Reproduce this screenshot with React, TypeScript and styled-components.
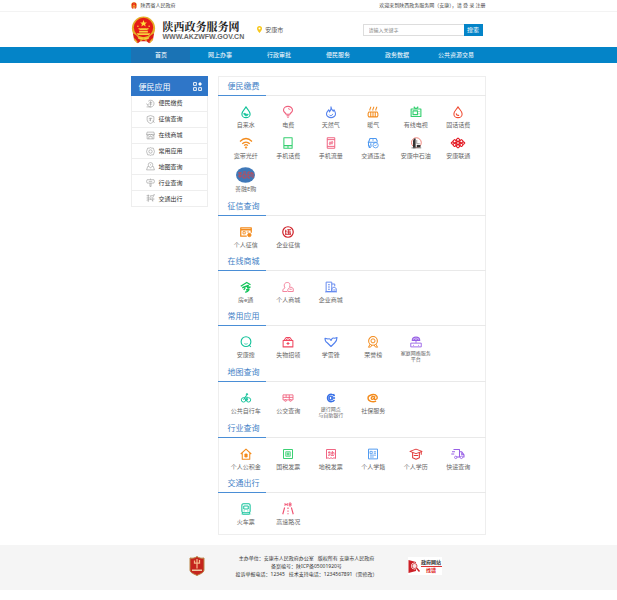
import React from 'react';
import styled, { createGlobalStyle } from 'styled-components';

const GlobalStyle = createGlobalStyle`
  * { box-sizing: border-box; }
  body {
    margin: 0;
    background: #fff;
    color: #555;
    font-family: "Noto Sans", "Noto Sans CJK SC", sans-serif;
    font-size: 6px;
  }
  a { color: inherit; text-decoration: none; }
  ul { list-style: none; margin: 0; padding: 0; }
  svg { display: block; overflow: visible; }
`;

const Container = styled.div`
  width: 57.4%;
  min-width: 340px;
  margin: 0 auto;
`;

const TopBar = styled.div`
  border-bottom: 1px solid #f3f3f3;
  font-size: 5px;
  line-height: 11px;
  color: #444;
`;

const TopRow = styled(Container)`
  display: flex;
  justify-content: space-between;
`;

const TopLink = styled.a`
  display: flex;
  align-items: center;
  gap: 3px;
`;

const Brand = styled(Container)`
  display: flex;
  align-items: center;
  height: 35px;
`;

const BrandLink = styled.a`
  display: flex;
  align-items: center;
  gap: 6px;
`;

const BrandName = styled.h1`
  margin: 0;
  font-family: "Noto Serif CJK SC", "Noto Sans CJK SC", serif;
  font-size: 11px;
  line-height: 14px;
  font-weight: 700;
  color: #222;
  white-space: nowrap;
`;

const BrandUrl = styled.div`
  font-family: "Liberation Sans", sans-serif;
  font-size: 7px;
  line-height: 8px;
  font-weight: 700;
  color: #666;
`;

const Place = styled.div`
  display: flex;
  align-items: center;
  gap: 3px;
  margin-left: 13px;
  line-height: 10px;
`;

const Search = styled.form`
  display: flex;
  width: 120px;
  height: 12px;
  margin: 0 3px 0 auto;
`;

const SearchInput = styled.input`
  flex: 1;
  min-width: 0;
  padding: 0 5px;
  border: 1px solid #ddd;
  border-right: 0;
  outline: 0;
  font: inherit;
  font-size: 5px;
  &::placeholder { color: #888; }
`;

const SearchButton = styled.button`
  width: 19px;
  padding: 0;
  border: 0;
  background: #0484c8;
  color: #fff;
  font: inherit;
`;

const Nav = styled.nav`
  background: #0484c8;
`;

const NavRow = styled(Container)`
  display: flex;
`;

const NavLink = styled.a<{ $active?: boolean }>`
  flex: 1;
  text-align: center;
  font-size: 6px;
  line-height: 16px;
  color: #fff;
  background: ${p => (p.$active ? '#1a73b5' : 'transparent')};
`;

const Body = styled(Container)`
  display: flex;
  align-items: flex-start;
  gap: 10px;
  padding: 13px 0 10px;
`;

const Sidebar = styled.aside`
  width: 77px;
  flex: none;
`;

const SideHead = styled.h2`
  display: flex;
  align-items: center;
  justify-content: space-between;
  height: 20px;
  margin: 0;
  padding: 0 6px 0 7px;
  background: #2f76c8;
  color: #fff;
  font-size: 8px;
  font-weight: 400;
`;

const SideList = styled.ul`
  display: flex;
  flex-direction: column;
  min-height: 111px;
  border: 1px solid #eee;
  border-top: 0;
`;

const SideItem = styled.li`
  display: flex;
  flex: 1;
  border-bottom: 1px solid #eee;
  &:last-child { border-bottom: 0; }
`;

const SideLink = styled.a`
  display: flex;
  flex: 1;
  align-items: center;
  gap: 3px;
  padding-left: 14px;
  line-height: 10px;
  color: #333;
`;

const Panel = styled.main`
  flex: 1;
  min-width: 0;
  box-shadow: inset 0 0 0 1px #eee;
`;

const SectionHead = styled.div`
  display: flex;
  height: 20px;
  border-bottom: 1px solid #e9e9e9;
`;

const SectionTitle = styled.h2`
  width: 48px;
  height: 20px;
  margin: 0;
  padding-left: 9px;
  border-bottom: 1px solid #4a8ed6;
  color: #3f7fc6;
  font-size: 8px;
  line-height: 20px;
  font-weight: 400;
`;

const Services = styled.div<{ $height: number }>`
  display: grid;
  grid-template-columns: repeat(6, 1fr);
  align-content: start;
  row-gap: 6px;
  min-height: ${p => p.$height}px;
  padding: 9px 6px 0 6px;
`;

const Service = styled.a`
  display: flex;
  flex-direction: column;
  align-items: center;
`;

const IconBox = styled.span<{ $tall?: boolean }>`
  display: flex;
  align-items: center;
  justify-content: center;
  height: ${p => (p.$tall ? 16 : 14)}px;
`;

const Label = styled.span<{ $small?: boolean }>`
  display: flex;
  flex-direction: column;
  align-items: center;
  justify-content: center;
  height: ${p => (p.$small ? 13 : 11)}px;
  font-size: ${p => (p.$small ? 5 : 6)}px;
  line-height: 6px;
  white-space: nowrap;
  color: #666;
`;

const Footer = styled.footer`
  background: #f5f5f5;
`;

const FooterRow = styled(Container)`
  display: grid;
  grid-template-columns: 16px 1fr 34px;
  align-items: center;
  padding: 9px 44px 12px 58px;
`;

const FooterText = styled.div`
  text-align: center;
  font-size: 5px;
  line-height: 8px;
  color: #333;
  white-space: nowrap;
`;

const FooterLine = styled.div`
  display: flex;
  justify-content: center;
  gap: 4px;
`;

const ReportLink = styled.a`
  display: flex;
  align-items: center;
  gap: 1px;
  height: 18px;
  background: #fff;
  line-height: 7px;
  font-size: 5px;
  font-weight: 700;
  color: #333;
  text-align: center;
`;

const ReportText = styled.span`
  flex: 1;
  white-space: nowrap;
`;

const ReportSub = styled.span`
  display: block;
  border-top: 1px solid #d33;
  color: #d22;
`;

const teal = '#13c29a';
const pink = '#f0627f';
const blue = '#5482ee';
const sky = '#4d98f0';
const orange = '#f38b1c';
const green = '#36cf70';
const red = '#e23a3a';
const purple = '#9860e6';

const drawings: Record<string, React.ReactNode> = {
  water: <><path d="M8 1C6 5 2.500 7 2.500 10.500a5.500 5 0 0 0 11 0C13.500 7 10 5 8 1z" strokeWidth="1.500" /><path d="M5 10c2-1 3 2 6 1-1 3-5 3-6-1z" fill="currentColor" /></>,
  bulb: <><path d="M5.500 11C5 9 2 8.500 2 5.500a6 5 0 0 1 12 0C14 8.500 11 9 10.500 11zM6 13h4M7 15h2" strokeWidth="1.500" /><path d="M8 3.500a3 3 0 0 1 3 2" /></>,
  flame: <><path d="M8 1c.5 4 2 4 3 6l1-2c1 2 2 3 2 5.500a6 5 0 0 1-12 0C2 8 4 7 5 5c1 1 1 2 1 3 2-2 2.500-4 2-7z" strokeWidth="1.400" /><path d="M5.500 11.500c1 2 4 2 5-1" /></>,
  heater: <><path d="M2.500 8h11l1 2v3l-1 1.500h-11l-1-1.500v-3zM5 8v6M8 8v6M11 8v6" strokeWidth="1.400" /><path d="M4 6c-1-2 1-2 1-5M8 6c-1-2 1-2 1-5M12 6c-1-2 1-2 1-5" strokeWidth="1.400" /></>,
  tv: <path d="M1.500 4h13v10h-13zM4 6.500h6v5H4zM12 7v1M12 10v1M5 1l3 3 3-3" strokeWidth="1.500" />,
  drop: <><path d="M8 1C6 5 2.500 7 2.500 10.500a5.500 5 0 0 0 11 0C13.500 7 10 5 8 1z" strokeWidth="1.400" /><path d="M5.500 10c.5 2 2 3 4 2.500" strokeWidth="1.600" /></>,
  wifi: <><path d="M0 6c5-5 11-5 16 0M3 9c3-3 7-3 10 0M5.500 11.500c1.500-1.500 3.500-1.500 5 0" strokeWidth="1.600" /><circle cx="8" cy="14" r="1" fill="currentColor" /></>,
  phone: <path d="M2.500 1h11v14h-11zM2.500 11.500h11M7 13.300h2" strokeWidth="1.400" />,
  data: <path d="M3 1h10v14H3zM3 3.500h10M3 12.500h10M5.500 7h5L9 5.500M10.500 9h-5L7 10.500" strokeWidth="1.300" />,
  car: <><path d="M7 12H2V7l2-5h8l2 4M1 7h13M4 9.500h2M3 12v2h2M7 4h2" strokeWidth="1.400" /><circle cx="11.500" cy="11" r="3.500" /><path d="m10 11 1 1 2-2" /></>,
  oil: <><circle cx="8.500" cy="7.500" r="6.500" stroke="#ed6a5f" /><path d="M4 15V5l1.500-3h2v13zM9 10.500h5V14H9z" fill="#333" stroke="none" /><path d="M9 4v5h4" stroke="#888" /><path d="M2 14.500h13" stroke="#777" /></>,
  unicom: <g strokeWidth="1.500"><rect x="6.200" y="2" width="3.600" height="3.600" rx=".8" transform="rotate(45 8 3.800)" /><rect x="6.200" y="10.400" width="3.600" height="3.600" rx=".8" transform="rotate(45 8 12.200)" /><rect x="6.200" y="6.200" width="3.600" height="3.600" rx=".8" transform="rotate(45 8 8)" /><rect x="1.700" y="4" width="3.600" height="3.600" rx=".8" transform="rotate(45 3.500 5.800)" /><rect x="10.700" y="4" width="3.600" height="3.600" rx=".8" transform="rotate(45 12.500 5.800)" /><rect x="1.700" y="8.600" width="3.600" height="3.600" rx=".8" transform="rotate(45 3.500 10.400)" /><rect x="10.700" y="8.600" width="3.600" height="3.600" rx=".8" transform="rotate(45 12.500 10.400)" /><path d="m1 6-2 2 2 2M15 6l2 2-2 2" /></g>,
  card: <><path d="M9 13.500H1v-11h14V9M1 5h14" strokeWidth="1.700" /><path d="M4 7.500h3v3H4zM9 8h3" /><circle cx="12.500" cy="12" r="2.300" fill="currentColor" /></>,
  seal: <><circle cx="8" cy="8" r="7" strokeWidth="1.600" /><path d="M5 5v6M4 7h2M7 5h5M9 5v6M7 8h5M11 9v2M4 11h8" strokeWidth="1.300" /></>,
  house: <path d="m1 7 8-5 5 3M3 9l8-3-1 3 4-1M5 12l2-3M11 10c2 0 1 4-4 5M8 12l4-1" strokeWidth="1.800" />,
  people: <><path d="M7 14H1c0-3 1-4 3-5-2-3-1-7 3-7s4 3 3 6" strokeWidth="1.300" /><path d="M8 14c-1-2 0-4 2-5l2-1 3 2v4zM10 11h3" strokeWidth="1.300" /></>,
  building: <><path d="M1.500 14V1.500H9V14zM4 5h2.500M4 8h2.500M4 11h2.500M9 4h4v3" strokeWidth="1.300" /><path d="M9 10l3-2 3 2v4H9zM11 12h3M0 14.500h16" strokeWidth="1.200" /></>,
  search: <><circle cx="8" cy="7.500" r="6.500" strokeWidth="1.500" /><path d="m12 12 2.500 2.500M6 10c1 1 3 1 4 0" strokeWidth="1.400" /></>,
  lost: <><path d="M1.500 6h13v8.500h-13zM2.500 6l3-4h5l3 4M5 6c2-3 4-3 6 0" strokeWidth="1.400" /><path d="M6 10h4M8 8v4" strokeWidth="1.400" /></>,
  heart: <path d="M8 14 3 9C1 8 0 5 0 3l4 1c2-1 3 0 4 2 1-3 3-4 5-3l3-1c0 3-1 5-3 7z" strokeWidth="1.500" />,
  medal: <><circle cx="8" cy="6.500" r="5.800" strokeWidth="1.400" /><circle cx="8" cy="6.500" r="2.700" strokeWidth="1.300" /><path d="m4 11-2 4 3-.5L6.500 12M12 11l2 4-3-.5L9.500 12" strokeWidth="1.300" /></>,
  router: <><path d="M1 9.500h14v5H1zM8 6v3M4 12.500h1M11 12.500h1" strokeWidth="1.200" /><path d="M3 6c0-6 10-6 10 0zM5 6c0-3 6-3 6 0" strokeWidth="1.500" /></>,
  bike: <><circle cx="4" cy="11" r="3.500" strokeWidth="1.500" /><circle cx="12" cy="11" r="3.500" strokeWidth="1.500" /><path d="m4 11 3-5 4 5H7L5 7M10 2l-3 4 4 1" strokeWidth="1.500" /><circle cx="9.500" cy="2" r="1.200" fill="currentColor" /></>,
  bus: <><path d="M0 3h16v8H0zM0 7h16M5 3v4M10 3v8" strokeWidth="1.400" /><circle cx="4" cy="12" r="1.500" /><circle cx="12" cy="12" r="1.500" /></>,
  bank: <path d="M13.500 5A6 6 0 1 0 13.500 11M10.500 6.500a3 3 0 1 0 0 3M8 8h6.500M12 1.500l1.500 3.500" strokeWidth="2.200" />,
  social: <path d="M13 13C7 15.500 0 13 0 8s11-8 14-3-4 7-4 4l1-4M9.500 6C6 4 4 9 6 10s3-1 4-2" strokeWidth="2.200" />,
  home: <><path d="m1 8 7-6.500L15 8M3 7v8h10V7" strokeWidth="1.400" /><path d="M6.500 8h3v4h-3z" fill="currentColor" /></>,
  national: <><path d="M2 2h12v12H2z" strokeWidth="1.300" /><path d="M5 5h6v6H5zM6 7h4M6 9h4M8 6v4" /></>,
  local: <><path d="M2 14V2h12v12l-2-1-2 1-2-1-2 1-2-1z" strokeWidth="1.300" /><path d="M4 6h3M5.500 4v6M4 10l3-1M8 7l4-1v3M10 4v5M8 5v5h4" /></>,
  record: <><path d="M2 1.500h12v13H2z" strokeWidth="1.300" /><path d="M4 4.500h3v3H4zM9 5h3M9 7h3M4 9.500h8M4 12h5" /></>,
  graduate: <path d="m0 4.500 8-3 8 3-8 3zM3.500 6v7l4.500 2 4.500-2V6M15 4.500V9M5 10h6" strokeWidth="1.400" />,
  truck: <><path d="M2 2h8v10H6M0 5h4M-1 8h4M10 5h3l3 4v3h-2M10 12h1M13 6v3h3" strokeWidth="1.400" /><circle cx="5" cy="12.500" r="1.600" /><circle cx="12.500" cy="12.500" r="1.600" /></>,
  train: <><rect x="2.500" y="1" width="11" height="12" rx="2" strokeWidth="1.400" /><path d="M5 4h6v4H5zM5 10.500h1M10 10.500h1M4 13l-2 2M12 13l2 2M3 15h10" strokeWidth="1.300" /></>,
  road: <><path d="M3.500 6 1 15M12.500 6l2.500 9M8 6v2M8 10v1.500M8 13.500V15" strokeWidth="1.500" /><path d="M4 0v4M4 2h3M7 0v4M9.500 0h2.500v4H9.500zM9.500 2H12" /></>,
  fee: <path d="M4 4a6 6 0 1 1-1 7M1 8l2 3 2-3M6 6h5M6 9h5M8 4v8M1 14h8" />,
  credit: <path d="M2 3l6-2 6 2v5c0 4-3 6-6 7-3-1-6-3-6-7zM5 6h6M5 9h4M8 5v6M12 10l3 4" />,
  shop: <path d="M2 7v7h12V7M1 6l1-4h12l1 4zM1 6c2 3 4 2 5 0 1 2 3 2 4 0 1 2 4 3 5 0M5 14v-4h6v4" />,
  gear: <><circle cx="8" cy="8" r="3" /><path d="m8 1 2 1h3l1 3 1 3-1 3-1 3h-3l-2 1-2-1H3l-1-3-1-3 1-3 1-3h3z" /></>,
  map: <path d="M5 8H3l-2 6h14l-2-6h-2M8 11C6 8 4 7 4 5a4 4 0 0 1 8 0c0 2-2 3-4 6zM8 4v2" />,
  sign: <path d="M2 3h12l1 3-1 3H2L1 6zM7 9v6h2V9M5 6h6M8 1v2" />,
  travel: <path d="M1 3h5M4 1v13M1 7h6M1 11l5-1M8 3h3l4-2-3 5v7l-2-4-3 1 2-3zM12 9h3" />,
};

const Icon = ({ name, color, size = 13 }: { name: string; color: string; size?: number }) => (
  <svg width={size} height={size} viewBox="0 0 16 16" fill="none" stroke="currentColor" strokeWidth="1.100" color={color} strokeLinejoin="round" aria-hidden="true">
    {drawings[name]}
  </svg>
);

const Emblem = ({ size }: { size: number }) => (
  <svg width={size} height={Math.round(size * 1.1)} viewBox="0 0 40 44" aria-hidden="true">
    <circle cx="20" cy="19" r="18.500" fill="#e5ae27" />
    <circle cx="20" cy="18" r="15.500" fill="#e51c17" />
    <path d="M3 27c5 3 8 5 9 9h16c1-4 4-6 9-9l-2 11-6 5-4-3H15l-4 3-6-5z" fill="#dc1d16" />
    <path d="M9 27h22l-2 3H11zM13 23h14v3H13zM15 19h10l2 3H13zM11 34h18l-3 3H14z" fill="#f7cf3c" />
    <path d="m20 6 1.500 4h4l-3 2.500 1 4-3.500-2.500-3.500 2.500 1-4-3-2.500h4z" fill="#ffdf3d" />
    <g fill="#ffdf3d"><circle cx="11" cy="16" r="1.200" /><circle cx="13" cy="20" r="1.200" /><circle cx="29" cy="16" r="1.200" /><circle cx="27" cy="20" r="1.200" /></g>
    <path d="M5 36l5 6M35 36l-5 6M15 39l5-3 5 3" stroke="#eab72b" strokeWidth="2" fill="none" />
  </svg>
);

const MallBadge = () => (
  <svg width="19" height="16" viewBox="0 0 19 16" aria-hidden="true">
    <ellipse cx="9.500" cy="8" rx="9.500" ry="7.700" fill="#3f78b8" />
    <g stroke="#d2454a" strokeWidth=".9" fill="none"><path d="M2 6h4M2 9h4M4 5v6M7 5h3M7 7h3v4H7zM12 5h2M12 8h2M12 11h2M12 5v6M15 5v5M17 6v5M15 6h2" /></g>
  </svg>
);

type Item = { label: string[]; icon: string; color: string };
const it = (label: string, icon: string, color: string): Item => ({ label: label.split('|'), icon, color });

const sections: { title: string; height: number; items: Item[] }[] = [
  { title: '便民缴费', height: 100, items: [
    it('自来水', 'water', teal), it('电费', 'bulb', pink), it('天然气', 'flame', blue), it('暖气', 'heater', orange), it('有线电视', 'tv', green), it('固话话费', 'drop', '#f04b32'),
    it('宽带光纤', 'wifi', orange), it('手机话费', 'phone', green), it('手机流量', 'data', pink), it('交通违法', 'car', sky), it('安康中石油', 'oil', '#333'), it('安康联通', 'unicom', '#e31923'),
    it('善融E购', 'mall', blue),
  ] },
  { title: '征信查询', height: 35, items: [it('个人征信', 'card', orange), it('企业征信', 'seal', '#cf2028')] },
  { title: '在线商城', height: 35, items: [it('房e通', 'house', '#13c45a'), it('个人商城', 'people', '#f3839b'), it('企业商城', 'building', '#6389ef')] },
  { title: '常用应用', height: 36, items: [it('安康搜', 'search', teal), it('失物招领', 'lost', '#f04860'), it('学雷锋', 'heart', blue), it('荣誉榜', 'medal', orange), it('家庭网络服务|平台', 'router', purple)] },
  { title: '地图查询', height: 35, items: [it('公共自行车', 'bike', teal), it('公交查询', 'bus', pink), it('建行网点|与自助银行', 'bank', '#376fe6'), it('社保服务', 'social', orange)] },
  { title: '行业查询', height: 35, items: [it('个人公积金', 'home', orange), it('国税发票', 'national', green), it('地税发票', 'local', pink), it('个人学籍', 'record', sky), it('个人学历', 'graduate', red), it('快递查询', 'truck', purple)] },
  { title: '交通出行', height: 42, items: [it('火车票', 'train', teal), it('高速路况', 'road', '#f05070')] },
];

const sideItems = [['便民缴费', 'fee'], ['征信查询', 'credit'], ['在线商城', 'shop'], ['常用应用', 'gear'], ['地图查询', 'map'], ['行业查询', 'sign'], ['交通出行', 'travel']];
const navItems = ['首页', '网上办事', '行政审批', '便民服务', '政务数据', '公共资源交易'];
const compact = new Set(['bank', 'social', 'bus', 'bike']);

export default function App() {
  return (
    <>
      <GlobalStyle />
      <header>
        <TopBar>
          <TopRow>
            <TopLink href="#"><Emblem size={6} />陕西省人民政府</TopLink>
            <span>欢迎来到陕西政务服务网（安康），请 <a href="#">登 录</a> <a href="#">注册</a></span>
          </TopRow>
        </TopBar>
        <Brand>
          <BrandLink href="#">
            <Emblem size={25} />
            <div>
              <BrandName>陕西政务服务网</BrandName>
              <BrandUrl>WWW.AKZWFW.GOV.CN</BrandUrl>
            </div>
          </BrandLink>
          <Place>
            <svg width="5" height="7" viewBox="0 0 10 14" aria-hidden="true"><path d="M5 0a5 5 0 0 0-5 5c0 4 5 9 5 9s5-5 5-9a5 5 0 0 0-5-5zm0 3a2 2 0 1 1 0 4 2 2 0 0 1 0-4z" fill="#f8c81c" /></svg>
            安康市
          </Place>
          <Search onSubmit={e => e.preventDefault()}>
            <SearchInput type="text" aria-label="搜索关键字" placeholder="请输入关键字" />
            <SearchButton type="submit">搜索</SearchButton>
          </Search>
        </Brand>
        <Nav>
          <NavRow>
            {navItems.map((n, i) => <NavLink key={n} href="#" $active={i === 0}>{n}</NavLink>)}
          </NavRow>
        </Nav>
      </header>
      <Body>
        <Sidebar>
          <SideHead>
            便民应用
            <svg width="9" height="9" viewBox="0 0 16 16" fill="none" stroke="#fff" strokeWidth="1.600" aria-hidden="true"><path d="M1 1h5v5H1zM1 10h5v5H1zM10 10h5v5h-5z" /><path d="m12.500 0 3.500 3.500L12.500 7 9 3.500z" fill="#fff" stroke="none" /></svg>
          </SideHead>
          <SideList>
            {sideItems.map(([label, icon]) => (
              <SideItem key={label}>
                <SideLink href="#"><Icon name={icon} color="#999" size={9} />{label}</SideLink>
              </SideItem>
            ))}
          </SideList>
        </Sidebar>
        <Panel>
          {sections.map(s => (
            <section key={s.title}>
              <SectionHead><SectionTitle>{s.title}</SectionTitle></SectionHead>
              <Services $height={s.height}>
                {s.items.map(item => (
                  <Service href="#" key={item.icon}>
                    <IconBox $tall={item.icon === 'mall'}>
                      {item.icon === 'mall' ? <MallBadge /> : <Icon name={item.icon} color={item.color} size={compact.has(item.icon) ? 10 : 12} />}
                    </IconBox>
                    <Label $small={item.label.length > 1}>
                      {item.label.map(line => <span key={line}>{line}</span>)}
                    </Label>
                  </Service>
                ))}
              </Services>
            </section>
          ))}
        </Panel>
      </Body>
      <Footer>
        <FooterRow>
          <svg width="16" height="20" viewBox="0 0 32 40" aria-hidden="true">
            <path d="M2 4c6 1 10 0 14-3 4 3 8 4 14 3v24c0 6-9 8-14 11C11 36 2 34 2 28z" fill="#c5251d" stroke="#b98746" strokeWidth="2" />
            <path d="M16 6v19M11 9v5h10V8" stroke="#f5b98a" strokeWidth="2.500" fill="none" />
            <path d="M6 27h20v3H6z" fill="#efc9a0" />
          </svg>
          <FooterText>
            <FooterLine><span>主办单位：安康市人民政府办公室</span><span>版权所有 安康市人民政府</span></FooterLine>
            <FooterLine>备案编号：陕ICP备05001920号</FooterLine>
            <FooterLine><span>投诉举报电话：12345</span><span>技术支持电话：1234567891（需修改）</span></FooterLine>
          </FooterText>
          <ReportLink href="#">
            <svg width="12" height="15" viewBox="0 0 24 30" aria-hidden="true">
              <path d="M1 2l15 4v18L1 28z" fill="#cc2027" />
              <circle cx="13" cy="14" r="6" fill="#f8dede" stroke="#fff" strokeWidth="2" />
              <circle cx="13" cy="14" r="5" fill="none" stroke="#cc2027" strokeWidth="1.500" />
              <path d="m17 18 6 7" stroke="#cc2027" strokeWidth="3" />
            </svg>
            <ReportText>政府网站<ReportSub>找错</ReportSub></ReportText>
          </ReportLink>
        </FooterRow>
      </Footer>
    </>
  );
}
